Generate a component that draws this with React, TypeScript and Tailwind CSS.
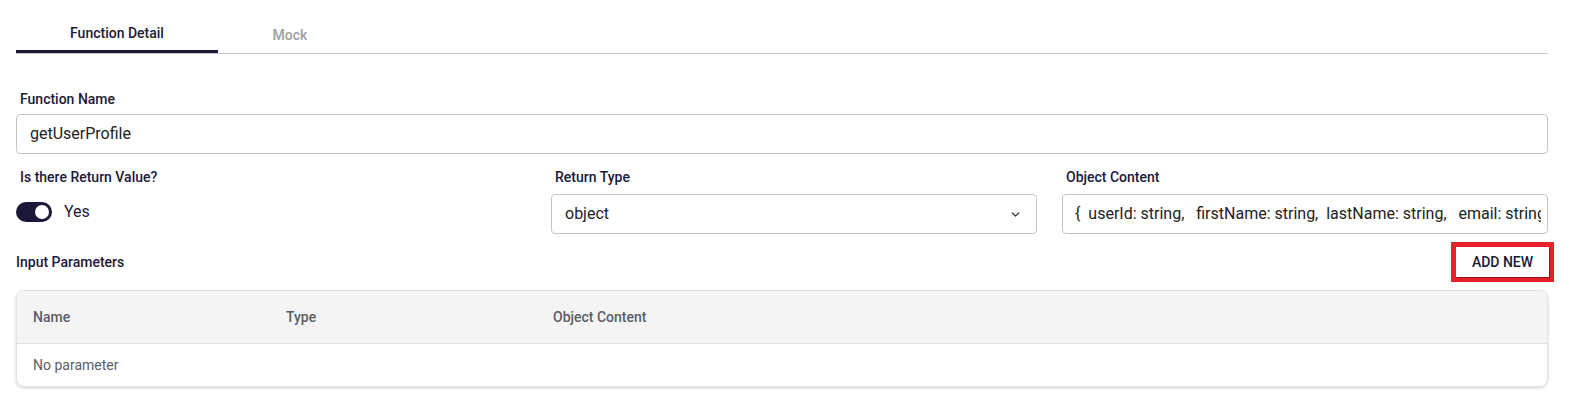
import { ChevronDown } from 'lucide-react'

const navy = 'text-[#1c1838]'

const objectContent =
  '{  userId: string,   firstName: string,  lastName: string,   email: string,   phone: string,   avatarUrl: string }'

function Label({ children, className = '' }: { children: React.ReactNode; className?: string }) {
  return <p className={`pl-1 text-[14px] leading-5 font-medium ${navy} ${className}`}>{children}</p>
}

export default function App() {
  return (
    <div className="pl-4 pr-[25px] pt-[17px] bg-white min-h-[411px]" style={{ fontFamily: 'Roboto, "Liberation Sans", sans-serif' }}>
      {/* Tabs */}
      <div className="flex border-b border-[#c8c8c8]">
        <button className={`w-[202px] h-[36px] text-[14px] font-medium ${navy} border-b-[3px] border-[#1c1838] -mb-px`}>
          Function Detail
        </button>
        <button className="w-[144px] h-[36px] text-[14px] font-medium text-[#a0a0a0]">Mock</button>
      </div>

      {/* Function name */}
      <Label className="mt-[35px]">Function Name</Label>
      <div className="mt-[5px] h-[40px] border border-[#c4c4c4] rounded-[4px] flex items-center px-[13px] text-[16px] text-[#222]">
        getUserProfile
      </div>

      {/* Return row */}
      <div className="mt-[13px] flex gap-[25px]">
        <div className="w-[510px]">
          <Label>Is there Return Value?</Label>
          <div className="mt-[13px] flex items-center gap-3">
            <div className="w-[36px] h-[20px] rounded-full bg-[#1c1838] flex items-center justify-end pr-[3px]">
              <div className="w-[14px] h-[14px] rounded-full bg-white" />
            </div>
            <span className={`text-[16px] ${navy}`}>Yes</span>
          </div>
        </div>
        <div className="w-[486px]">
          <Label>Return Type</Label>
          <div className="mt-[7px] h-[40px] border border-[#c4c4c4] rounded-[4px] flex items-center justify-between pl-[13px] pr-[14px] text-[16px] text-[#222]">
            <span>object</span>
            <ChevronDown className="w-[13px] h-[13px] text-[#333]" strokeWidth={2.5} />
          </div>
        </div>
        <div className="w-[486px]">
          <Label>Object Content</Label>
          <div className="mt-[7px] h-[40px] border border-[#c4c4c4] rounded-[4px] flex items-center pl-[12px] pr-[6px] text-[16px] text-[#222] overflow-hidden">
            <span className="whitespace-pre overflow-hidden">{objectContent}</span>
          </div>
        </div>
      </div>

      {/* Input parameters */}
      <div className="mt-[8px] flex items-center justify-between">
        <p className={`text-[14px] font-medium ${navy}`}>Input Parameters</p>
        <div className="border-[5px] border-[#e8202a] -mr-[6px]">
          <button className={`w-[93px] h-[30px] bg-white text-[14px] font-medium ${navy} shadow-[1px_1px_1px_rgba(0,0,0,0.35)]`}>
            ADD NEW
          </button>
        </div>
      </div>

      {/* Table */}
      <div className="mt-[8px] rounded-[8px] border border-[#e2e2e2] shadow-[0_1px_3px_rgba(0,0,0,0.18)] overflow-hidden">
        <div className="flex h-[53px] items-center bg-[#f4f4f4] border-b border-[#e0e0e0] text-[14px] font-medium text-[#5c5c66]">
          <div className="w-[253px] pl-[16px]">Name</div>
          <div className="w-[267px] pl-[16px]">Type</div>
          <div className="flex-1 pl-[16px]">Object Content</div>
        </div>
        <div className="h-[42px] flex items-center pl-[16px] text-[14px] text-[#5c5c66]">No parameter</div>
      </div>
    </div>
  )
}
